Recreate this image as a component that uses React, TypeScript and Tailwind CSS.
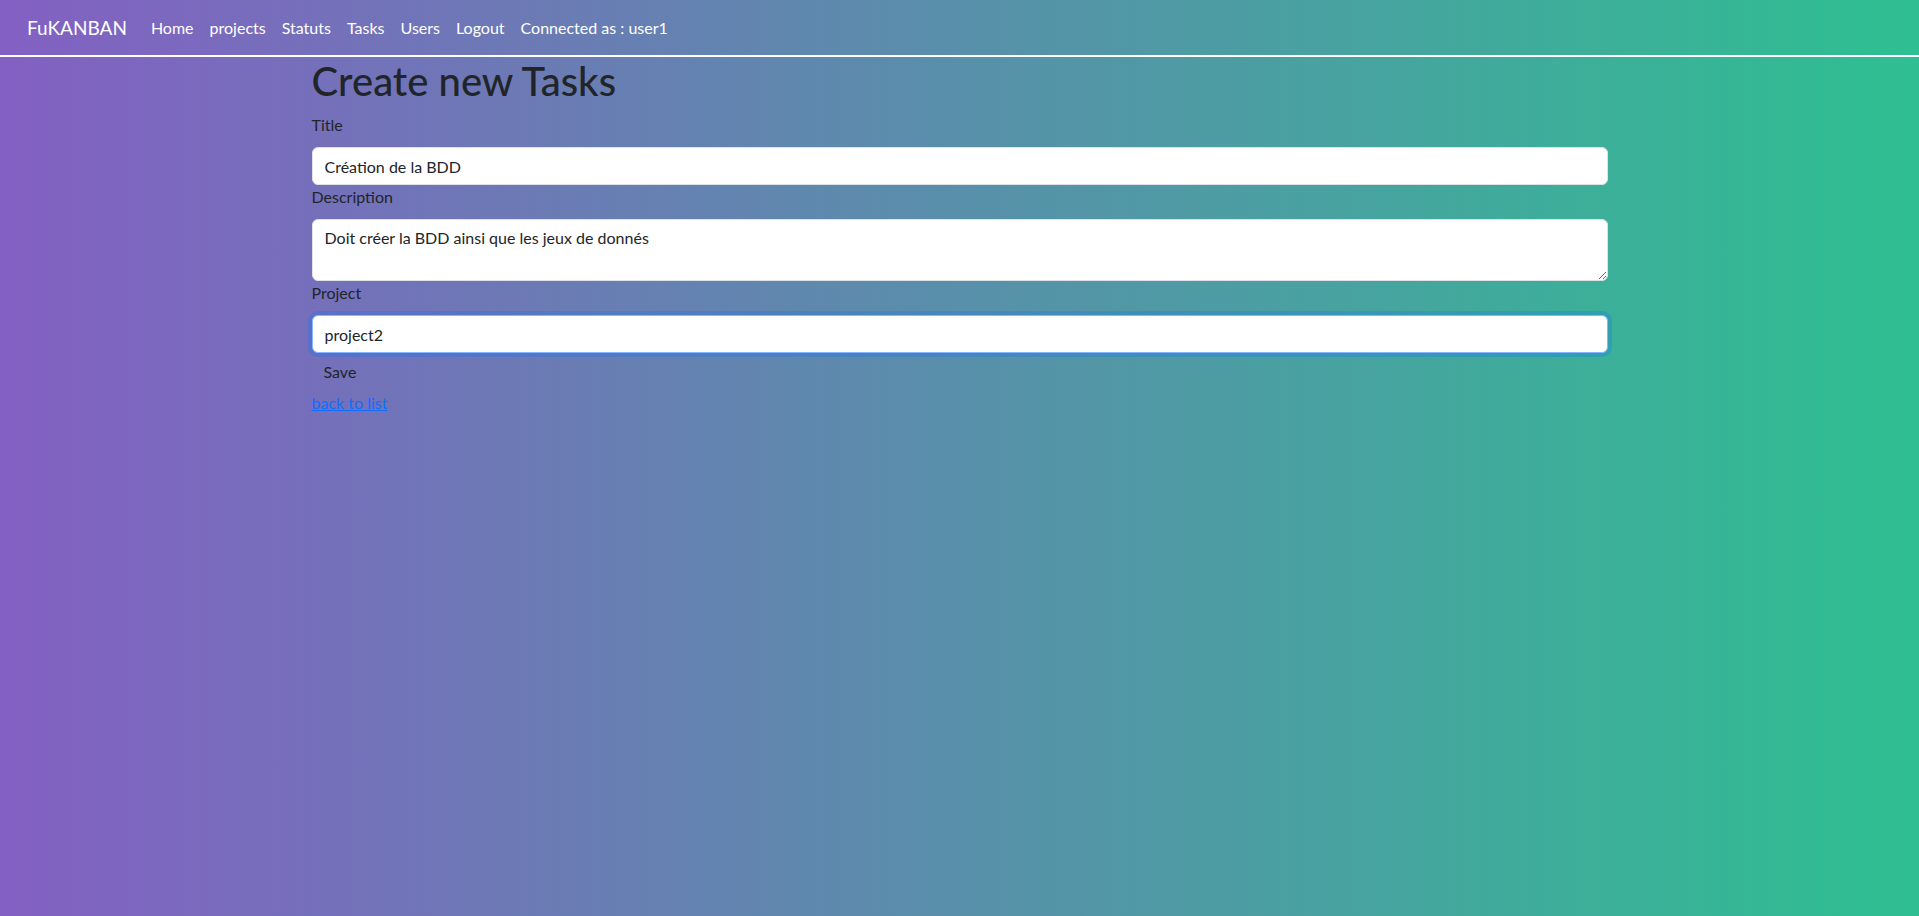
import { useState } from 'react';

const navLinks = ['Home', 'projects', 'Statuts', 'Tasks', 'Users', 'Logout', 'Connected as : user1'];

function Navbar() {
  return (
    <nav className="h-[57px] border-b-2 border-white flex items-center pl-[27px]">
      <a href="#" className="text-white text-[19px] mr-4 leading-none">
        FuKANBAN
      </a>
      <ul className="flex items-center">
        {navLinks.map((link) => (
          <li key={link}>
            <a href="#" className="block px-2 text-white text-base leading-6">
              {link}
            </a>
          </li>
        ))}
      </ul>
    </nav>
  );
}

export default function App() {
  const [title, setTitle] = useState('Création de la BDD');
  const [description, setDescription] = useState(
    'Doit créer la BDD ainsi que les jeux de donnés'
  );
  const [project, setProject] = useState('project2');

  return (
    <div className="min-h-screen bg-[linear-gradient(to_right,#8360c3,#2ebf91)] font-['Lato',sans-serif] text-[#212529]">
      <Navbar />
      <main className="mx-auto w-[1320px] px-3">
        <h1 className="text-[40px] leading-[48px] font-medium mb-2">Create new Tasks</h1>
        <form className="flex flex-col" onSubmit={(e) => e.preventDefault()}>
          <label className="block text-base leading-6 mb-[10px]">Title</label>
          <input
            value={title}
            onChange={(e) => setTitle(e.target.value)}
            className="block w-full h-[38px] bg-white border border-[#dee2e6] rounded-md px-3 text-base outline-none"
          />
          <label className="block text-base leading-6 mb-[10px]">Description</label>
          <textarea
            rows={2}
            value={description}
            onChange={(e) => setDescription(e.target.value)}
            className="block w-full h-[62px] bg-white border border-[#dee2e6] rounded-md px-3 py-[6px] text-base leading-6 outline-none resize-y"
          />
          <label className="block text-base leading-6 mb-[10px]">Project</label>
          <input
            value={project}
            onChange={(e) => setProject(e.target.value)}
            className="block w-full h-[38px] bg-white border border-[#86b7fe] rounded-md px-3 text-base outline-none shadow-[0_0_0_4px_rgba(13,110,253,0.25)]"
          />
          <div>
            <button type="submit" className="px-3 py-[7px] text-base leading-6 text-[#212529]">
              Save
            </button>
          </div>
        </form>
        <a href="#" className="text-[#0d6efd] underline text-base leading-6">
          back to list
        </a>
      </main>
    </div>
  );
}
